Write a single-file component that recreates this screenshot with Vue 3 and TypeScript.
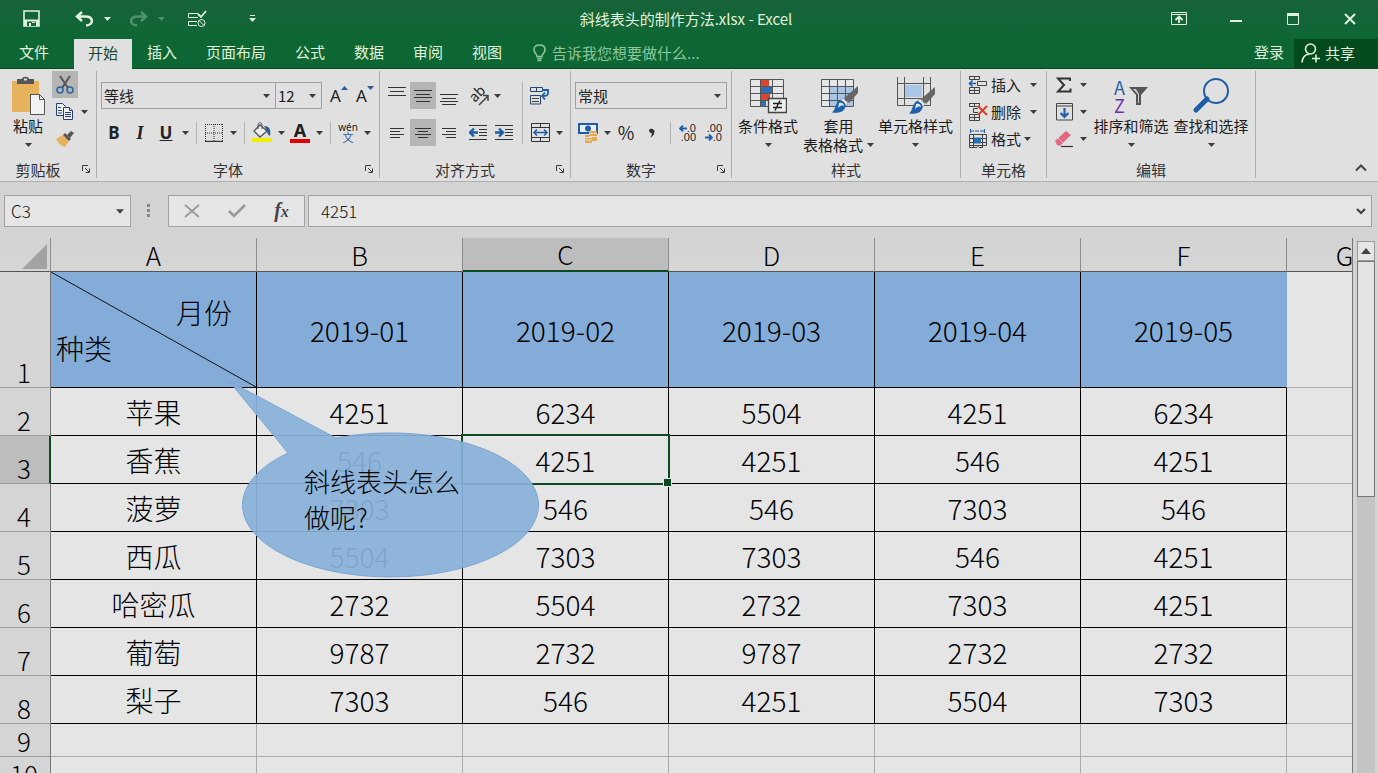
<script setup lang="ts">
import { ref } from 'vue'

interface SheetRow {
  n: number
  name: string
  values: string[]
}

const tabs: string[] = ['插入', '页面布局', '公式', '数据', '审阅', '视图']
const columns: string[] = ['A', 'B', 'C', 'D', 'E', 'F']
const months: string[] = ['2019-01', '2019-02', '2019-03', '2019-04', '2019-05']
const rows: SheetRow[] = [
  { n: 2, name: '苹果', values: ['4251', '6234', '5504', '4251', '6234'] },
  { n: 3, name: '香蕉', values: ['546', '4251', '4251', '546', '4251'] },
  { n: 4, name: '菠萝', values: ['7303', '546', '546', '7303', '546'] },
  { n: 5, name: '西瓜', values: ['5504', '7303', '7303', '546', '4251'] },
  { n: 6, name: '哈密瓜', values: ['2732', '5504', '2732', '7303', '4251'] },
  { n: 7, name: '葡萄', values: ['9787', '2732', '9787', '2732', '2732'] },
  { n: 8, name: '梨子', values: ['7303', '546', '4251', '5504', '7303'] },
]
const emptyRows: number[] = [9, 10]

const fontName = ref('等线')
const fontSize = ref('12')
const numberFormat = ref('常规')
const cellName = ref('C3')
const formula = ref('4251')
</script>

<template>
  <div class="app">
    <svg class="symbols" aria-hidden="true">
      <symbol id="caret" viewBox="0 0 7 4"><path d="M0 0H7L3.500 4Z" fill="currentColor" /></symbol>
      <symbol id="launcher" viewBox="0 0 8 8">
        <path d="M.5 6V.5H6M3 3L7 7M7.500 3.500V7.500H3.500" fill="none" stroke="currentColor" />
      </symbol>
      <symbol id="brush" viewBox="0 0 26 28">
        <path d="M26 0V7L17 17L12 12Z" fill="#666" />
        <path d="M11 12L16 17L14 20L8 14Z" fill="#eee" stroke="#777" stroke-width=".6" />
        <path d="M8 14C12 15 15 18 13 22C11 27 5 27 0 26.500C4 24 3 16 8 14Z" fill="#1f62ab" />
        <path d="M7 17C9 16 12 17 12 20C9 19 8 20 6 22Z" fill="#dce8f4" />
      </symbol>
    </svg>

    <header class="titlebar">
      <div class="quick">
        <button class="q save" aria-label="保存">
          <svg width="17" height="17" viewBox="0 0 17 17"><path d="M1 1H16V16H1Z" fill="none" stroke="currentColor" stroke-width="1.600" /><path d="M1 9.500H16V16H1Z" fill="currentColor" /><path d="M4 11.500H13V16H4Z" fill="#126637" /><path d="M6 13H8V16H6ZM9 12H12V13H9Z" fill="currentColor" /></svg>
        </button>
        <button class="q undo" aria-label="撤消">
          <svg width="19" height="16" viewBox="0 0 19 16"><path d="M7 1L2 5.500L7 10M2.500 5.500H10C19 5.500 19 14 11 14.500" fill="none" stroke="currentColor" stroke-width="2.500" /></svg>
        </button>
        <button class="c near" aria-label="撤消选项"><svg width="7" height="4"><use href="#caret" /></svg></button>
        <button class="q redo dim" aria-label="恢复">
          <svg width="19" height="16" viewBox="0 0 19 16"><path d="M12 1L17 5.500L12 10M16.500 5.500H9C0 5.500 0 14 8 14.500" fill="none" stroke="currentColor" stroke-width="2.500" /></svg>
        </button>
        <button class="c near dim" aria-label="恢复选项"><svg width="7" height="4"><use href="#caret" /></svg></button>
        <button class="q tasks" aria-label="任务">
          <svg width="19" height="18" viewBox="0 0 19 18" fill="none" stroke="currentColor"><path d="M10 3.500H.5V7.500H10M9 11.500H.5V15.500H9" /><path d="M10 4L13 7L18 1" stroke-width="1.800" /><circle cx="13.500" cy="13" r="3.500" /><path d="M11 10.500L16 15.500" /></svg>
        </button>
        <button class="c more" aria-label="自定义快速访问工具栏">
          <svg width="7" height="8" viewBox="0 0 7 8"><path d="M1 .5H6" stroke="currentColor" /><path d="M0 3H7L3.500 7Z" fill="currentColor" /></svg>
        </button>
      </div>
      <h1>斜线表头的制作方法.xlsx - Excel</h1>
      <div class="window">
        <button aria-label="功能区显示选项"><svg width="16" height="13" viewBox="0 0 16 13" fill="none" stroke="currentColor"><path d="M.5 .5H15.500V12.500H.5ZM0 2.500H16" /><path d="M8 11V5M4.500 8L8 4.500L11.500 8" stroke-width="1.800" /></svg></button>
        <button aria-label="最小化"><svg width="12" height="13" viewBox="0 0 12 13"><path d="M0 8H12V10H0Z" fill="currentColor" /></svg></button>
        <button aria-label="最大化"><svg width="12" height="12" viewBox="0 0 12 12"><path d="M.5 1H11.500V11.500H.5Z" fill="none" stroke="currentColor" /><path d="M0 0H12V3H0Z" fill="currentColor" /></svg></button>
        <button aria-label="关闭"><svg width="12" height="12" viewBox="0 0 12 12"><path d="M1 1L11 11M11 1L1 11" stroke="currentColor" stroke-width="2" /></svg></button>
      </div>
    </header>

    <nav class="tabs">
      <button class="tab file">文件</button>
      <button class="tab active">开始</button>
      <button v-for="t in tabs" :key="t" class="tab">{{ t }}</button>
      <button class="tell">
        <svg width="13" height="18" viewBox="0 0 13 18" fill="none" stroke="currentColor"><path d="M4 12.500C4 10 1 9 1 5.500C1 2.500 3.500 1 6.500 1S12 2.500 12 5.500C12 9 9 10 9 12.500Z" stroke-width="1.600" /><path d="M4 14.500H9M4.500 16.500H8.500" stroke-width="1.500" /></svg>
        告诉我您想要做什么...
      </button>
      <button class="login">登录</button>
      <button class="share">
        <svg width="20" height="20" viewBox="0 0 20 20" fill="none" stroke="currentColor" stroke-width="1.600"><circle cx="9.500" cy="6" r="5" /><path d="M1 19.500C1.500 14.500 4 11.500 8 11.300M11 15.500H19M15 11.500V19.500" /></svg>
        共享
      </button>
    </nav>

    <section class="ribbon" aria-label="开始">
      <div class="group clipboard">
        <div class="body top">
          <button class="big paste">
            <span class="pic"><svg width="36" height="40" viewBox="0 0 36 40"><path d="M2 5H29V36H2Z" fill="#e6b35c" /><path d="M7 3H12C12 0 19 0 19 3H24V8H7Z" fill="#555" /><path d="M14 2.500H17V4.500H14Z" fill="#ddd" /><path d="M20.500 18.500H29.500L34.500 23.500V38.500H20.500Z" fill="#f2f2f2" stroke="#555" /><path d="M29.500 18.500V23.500H34.500" fill="none" stroke="#555" /></svg></span>
            <span>粘贴</span>
            <span class="second"><svg width="7" height="4"><use href="#caret" /></svg></span>
          </button>
          <div class="stack">
            <button class="t on" aria-label="剪切"><svg width="18" height="20" viewBox="0 0 18 20" fill="none"><path d="M4 1L12 13M14 1L6 13" stroke="#555" stroke-width="2" /><circle cx="4" cy="15" r="3" stroke="#2a62a3" stroke-width="1.500" /><circle cx="14" cy="15" r="3" stroke="#2a62a3" stroke-width="1.500" /></svg></button>
            <div class="row">
              <button class="t" aria-label="复制"><svg width="18" height="19" viewBox="0 0 18 19" fill="#eee" stroke="#26416e"><path d="M.5 1.500H6.500L9.500 4.500V13.500H.5Z" /><path d="M2 5.500H5M2 8.500H6M2 11H6" /><path d="M7.500 5.500H13.500L16.500 8.500V17.500H7.500Z" /><path d="M13.500 5.500V8.500H16.500M9 10.500H15M9 12.500H15M9 14.500H15" /></svg></button>
              <button class="c" aria-label="复制选项"><svg width="7" height="4"><use href="#caret" /></svg></button>
            </div>
            <button class="t" aria-label="格式刷"><svg width="18" height="16" viewBox="0 0 18 16"><path d="M0 8L7 4L13 10L9 16C5 15 2 12 0 8Z" fill="#e6b35c" /><path d="M7 4L9 2L15 8L13 10Z" fill="#555" /><path d="M11 4L15 0L18 2L14 7Z" fill="#555" /></svg></button>
          </div>
        </div>
        <div class="caption"><span>剪贴板</span><button class="launch" aria-label="剪贴板设置"><svg width="8" height="8"><use href="#launcher" /></svg></button></div>
      </div>

      <div class="group font">
        <div class="body">
          <div class="lines">
            <div class="row">
              <span class="pick name"><select v-model="fontName" aria-label="字体"><option>等线</option></select><svg width="7" height="4"><use href="#caret" /></svg></span>
              <span class="pick size"><select v-model="fontSize" aria-label="字号"><option>12</option></select><svg width="7" height="4"><use href="#caret" /></svg></span>
              <button class="t grow first" aria-label="增大字号"><span>A</span><svg width="7" height="4" viewBox="0 0 7 4"><path d="M0 4H7L3.500 0Z" fill="#2a5c94" /></svg></button>
              <button class="t grow" aria-label="减小字号"><span>A</span><svg width="7" height="4" viewBox="0 0 7 4"><path d="M0 0H7L3.500 4Z" fill="#2a5c94" /></svg></button>
            </div>
            <div class="row">
              <button class="t b" aria-label="加粗">B</button>
              <button class="t i" aria-label="倾斜">I</button>
              <button class="t u" aria-label="下划线">U</button>
              <button class="c" aria-label="下划线选项"><svg width="7" height="4"><use href="#caret" /></svg></button>
              <i class="sep"></i>
              <button class="t" aria-label="边框"><svg width="18" height="18" viewBox="0 0 18 18" fill="none" stroke="#333"><path d="M.5 0V17M17.500 0V17M9 0V17M0 .5H18M0 9H18" stroke-dasharray="1 1" /><path d="M0 17.500H18" stroke-width="1.400" /></svg></button>
              <button class="c" aria-label="边框选项"><svg width="7" height="4"><use href="#caret" /></svg></button>
              <i class="sep"></i>
              <button class="t" aria-label="填充颜色"><svg width="20" height="21" viewBox="0 0 20 21"><path d="M8 3L15 9L8 15L2 9Z" fill="#eee" stroke="#555" stroke-width="1.300" /><path d="M6 7V3C6 0 10 0 10 3V7" fill="none" stroke="#555" /><path d="M12 4C18 4 19 8 18 14C16 13 15 11 15 9Z" fill="#2a6099" /><path d="M0 16H20V20H0Z" fill="#f1ee00" /></svg></button>
              <button class="c" aria-label="填充颜色选项"><svg width="7" height="4"><use href="#caret" /></svg></button>
              <button class="t color" aria-label="字体颜色"><span>A</span></button>
              <button class="c" aria-label="字体颜色选项"><svg width="7" height="4"><use href="#caret" /></svg></button>
              <i class="sep"></i>
              <button class="t pinyin" aria-label="拼音指南"><span>wén</span><span class="wen">文</span></button>
              <button class="c" aria-label="拼音选项"><svg width="7" height="4"><use href="#caret" /></svg></button>
            </div>
          </div>
        </div>
        <div class="caption"><span>字体</span><button class="launch" aria-label="字体设置"><svg width="8" height="8"><use href="#launcher" /></svg></button></div>
      </div>

      <div class="group align">
        <div class="body">
          <div class="lines">
            <div class="row">
              <button class="t" aria-label="顶端对齐"><svg width="18" height="18" viewBox="0 0 18 18" stroke="#333"><path d="M0 .5H18M2 4.500H16M0 8.500H18" /></svg></button>
              <button class="t on" aria-label="垂直居中"><svg width="18" height="18" viewBox="0 0 18 18" stroke="#333"><path d="M0 3.500H18M2 7.500H16M0 10.500H18M2 14.500H16" /></svg></button>
              <button class="t" aria-label="底端对齐"><svg width="18" height="18" viewBox="0 0 18 18" stroke="#333"><path d="M0 7.500H18M2 11.500H16M0 14.500H18M2 17.500H16" /></svg></button>
              <button class="t gap orient" aria-label="方向"><span>ab</span><svg width="11" height="12" viewBox="0 0 11 12"><path d="M1 11L10 2M5 1.500H10V7" fill="none" stroke="#444" stroke-width="1.500" /></svg></button>
              <button class="c" aria-label="方向选项"><svg width="7" height="4"><use href="#caret" /></svg></button>
            </div>
            <div class="row">
              <button class="t" aria-label="左对齐"><svg width="14" height="12" viewBox="0 0 14 12" stroke="#333"><path d="M0 1.500H14M0 4.500H10M0 7.500H14M0 10.500H10" /></svg></button>
              <button class="t on" aria-label="居中"><svg width="16" height="12" viewBox="0 0 16 12" stroke="#333"><path d="M0 1.500H16M3 4.500H13M0 7.500H16M3 10.500H13" /></svg></button>
              <button class="t" aria-label="右对齐"><svg width="14" height="12" viewBox="0 0 14 12" stroke="#333"><path d="M0 1.500H14M4 4.500H14M0 7.500H14M4 10.500H14" /></svg></button>
              <button class="t gap" aria-label="减少缩进量"><svg width="18" height="17" viewBox="0 0 18 17" fill="none"><path d="M0 1.500H18M10 5.500H18M10 8.500H18M10 11.500H18M0 15.500H18" stroke="#333" /><path d="M9 8.500H2M5 4.500L1 8.500L5 12.500" stroke="#1f5ea6" stroke-width="2.400" /></svg></button>
              <button class="t" aria-label="增加缩进量"><svg width="18" height="17" viewBox="0 0 18 17" fill="none"><path d="M0 1.500H18M10 5.500H18M10 8.500H18M10 11.500H18M0 15.500H18" stroke="#333" /><path d="M0 8.500H7M4 4.500L8 8.500L4 12.500" stroke="#1f5ea6" stroke-width="2.400" /></svg></button>
            </div>
          </div>
          <i class="sep tall"></i>
          <div class="lines">
            <div class="row">
              <button class="t" aria-label="自动换行"><svg width="20" height="19" viewBox="0 0 20 19" fill="none"><path d="M.5 1.500H12.500V5.500H.5ZM.5 9.500H10.500V18H.5ZM6.500 1.500V5.500" stroke="#2b4668" /><path d="M2 12.500H9M2 15.500H9" stroke="#444" /><path d="M12 4H18V7C18 10 16 10 12 10M15 6.500L12 10L15 13.500" stroke="#1f5ea6" stroke-width="1.800" /></svg></button>
            </div>
            <div class="row">
              <button class="t" aria-label="合并后居中"><svg width="19" height="19" viewBox="0 0 19 19" fill="none"><path d="M.5 .5H18.500V18.500H.5ZM.5 4.500H18.500M.5 14.500H18.500M9.500 .5V4.500M9.500 14.500V18.500" stroke="#333" /><path d="M3 9.500H16M6 6.500L3 9.500L6 12.500M13 6.500L16 9.500L13 12.500" stroke="#1f5ea6" stroke-width="1.500" /></svg></button>
              <button class="c" aria-label="合并选项"><svg width="7" height="4"><use href="#caret" /></svg></button>
            </div>
          </div>
        </div>
        <div class="caption"><span>对齐方式</span><button class="launch" aria-label="对齐设置"><svg width="8" height="8"><use href="#launcher" /></svg></button></div>
      </div>

      <div class="group number">
        <div class="body">
          <div class="lines">
            <div class="row">
              <span class="pick format"><select v-model="numberFormat" aria-label="数字格式"><option>常规</option></select><svg width="7" height="4"><use href="#caret" /></svg></span>
            </div>
            <div class="row">
              <button class="t" aria-label="会计数字格式"><svg width="20" height="20" viewBox="0 0 20 20"><path d="M1 1H19V10H1Z" fill="#e8eef4" stroke="#1f5ea6" stroke-width="2" /><circle cx="10" cy="5.500" r="3" fill="#1f5ea6" /><path d="M11 8H19V18H14V20H7V12H11Z" fill="#e4a850" /><path d="M11 10.500H19M11 13.500H19M7 14.500H14M7 17H14" stroke="#e0e0e0" /></svg></button>
              <button class="c" aria-label="会计格式选项"><svg width="7" height="4"><use href="#caret" /></svg></button>
              <button class="t percent" aria-label="百分比样式">%</button>
              <button class="t" aria-label="千位分隔样式"><svg width="6" height="10" viewBox="0 0 6 10"><path d="M0 2.500C0 0 5.500 0 5.500 3.500C5.500 6.500 3.500 9 1 9.500C2.500 8 3 6.500 2.500 5C1 5 0 4 0 2.500Z" fill="#333" /></svg></button>
              <i class="sep"></i>
              <button class="t dec" aria-label="增加小数位数"><span><svg width="8" height="7" viewBox="0 0 8 7" fill="none"><path d="M8 3.500H2M4 .5L1 3.500L4 6.500" stroke="#1f5ea6" stroke-width="1.800" /></svg>.0</span><span>.00</span></button>
              <button class="t dec" aria-label="减少小数位数"><span>.00</span><span><svg width="8" height="7" viewBox="0 0 8 7" fill="none"><path d="M0 3.500H6M4 .5L7 3.500L4 6.500" stroke="#1f5ea6" stroke-width="1.800" /></svg>.0</span></button>
            </div>
          </div>
        </div>
        <div class="caption"><span>数字</span><button class="launch" aria-label="数字设置"><svg width="8" height="8"><use href="#launcher" /></svg></button></div>
      </div>

      <div class="group styles">
        <div class="body top">
          <button class="big w66">
            <span class="pic"><svg width="38" height="36" viewBox="0 0 38 36"><path d="M1.500 1.500H34.500V28.500H1.500Z" fill="#e6e6e6" /><path d="M12 1H20V8H12ZM12 16H21V22H12Z" fill="#d8472b" /><path d="M12 8H23V15H12ZM12 23H17V29H12Z" fill="#2e6db4" /><path d="M1.500 1.500H34.500V28.500H1.500ZM11.500 1V28M23.500 1V28M1 8.500H34M1 15.500H34M1 22.500H34" fill="none" stroke="#555" /><path d="M19.500 20.500H37.500V34.500H19.500Z" fill="#ededed" stroke="#444" stroke-width="1.400" /><path d="M24 25.500H33M24 29.500H33M31 22.500L26 32.500" stroke="#222" stroke-width="1.400" /></svg></span>
            <span>条件格式</span>
            <span class="second"><svg width="7" height="4"><use href="#caret" /></svg></span>
          </button>
          <button class="big w75">
            <span class="pic"><svg width="38" height="36" viewBox="0 0 38 36"><path d="M1.500 1.500H33.500V28.500H1.500Z" fill="#e6e6e6" /><path d="M10 8H33V28H10Z" fill="#a9c6e6" /><path d="M1.500 1.500H33.500V28.500H1.500ZM9.500 1V28M17.500 1V28M25.500 1V28M1 8.500H33M1 15.500H33M1 22.500H33" fill="none" stroke="#555" /><use href="#brush" x="12" y="8" width="26" height="28" /></svg></span>
            <span>套用</span>
            <span class="second">表格格式<svg width="7" height="4"><use href="#caret" /></svg></span>
          </button>
          <button class="big w79">
            <span class="pic"><svg width="40" height="38" viewBox="0 0 40 38"><path d="M9 8H26V20H9Z" fill="#a9c6e6" /><path d="M1.500 0V28.500H34.500V0M8.500 0V28M27.500 0V28M1 6.500H35M1 21.500H35" fill="none" stroke="#555" /><use href="#brush" x="13" y="10" width="26" height="28" /></svg></span>
            <span>单元格样式</span>
            <span class="second"><svg width="7" height="4"><use href="#caret" /></svg></span>
          </button>
        </div>
        <div class="caption"><span>样式</span></div>
      </div>

      <div class="group cells">
        <div class="body top">
          <div class="stack">
            <button class="line"><svg width="20" height="20" viewBox="0 0 20 20" fill="none" stroke="#444"><path d="M1.500 1V4.500H11.500V1M6.500 1V4.500M9.500 6.500H18.500V10.500H9.500ZM1.500 12.500H11.500V18.500H1.500ZM1.500 15.500H11.500M6.500 12.500V18.500M1 1.500H12" /><path d="M8 8.500H2M4.500 5.500L1.500 8.500L4.500 11.500" stroke="#1f5ea6" stroke-width="1.600" /></svg><span>插入</span><svg class="far" width="7" height="4"><use href="#caret" /></svg></button>
            <button class="line"><svg width="20" height="20" viewBox="0 0 20 20" fill="none" stroke="#444"><path d="M1.500 1V4.500H11.500V1M6.500 1V4.500M5.500 6.500H10M5.500 6.500V10.500H10M1.500 12.500H11.500V18.500H1.500ZM1.500 15.500H11.500M6.500 12.500V18.500M1 1.500H12" /><path d="M10 4L19 13M19 4L10 13" stroke="#d2402b" stroke-width="2" /></svg><span>删除</span><svg class="far" width="7" height="4"><use href="#caret" /></svg></button>
            <button class="line"><svg width="20" height="20" viewBox="0 0 20 20" fill="none" stroke="#444"><path d="M2 2H17M2.500 0V4M16.500 0V4" stroke="#1f5ea6" stroke-dasharray="4 1" /><path d="M1.500 5.500H18.500V16.500H1.500ZM5.500 5V19M14.500 5V19M1 9.500H18M1 13.500H18M1.500 16V18.500H9L11 16.500M11 18.500H14" /><path d="M6 8.500H13V14.500H6Z" fill="#2e6db4" stroke="none" /></svg><span>格式</span><svg width="7" height="4"><use href="#caret" /></svg></button>
          </div>
        </div>
        <div class="caption"><span>单元格</span></div>
      </div>

      <div class="group editing">
        <div class="body top">
          <div class="stack">
            <div class="row"><button class="t" aria-label="自动求和"><svg width="16" height="16" viewBox="0 0 16 16"><path d="M14 4V1.500H2L8 8L2 14.500H14.500V11.500" fill="none" stroke="#333" stroke-width="2" /></svg></button><button class="c" aria-label="求和选项"><svg width="7" height="4"><use href="#caret" /></svg></button></div>
            <div class="row"><button class="t" aria-label="填充"><svg width="17" height="18" viewBox="0 0 17 18" fill="none"><path d="M.5 .5H16.500V17H.5ZM.5 3H16.500" stroke="#444" /><path d="M8.500 5V14M4.500 10L8.500 14L12.500 10" stroke="#1f5ea6" stroke-width="2.200" /></svg></button><button class="c" aria-label="填充选项"><svg width="7" height="4"><use href="#caret" /></svg></button></div>
            <div class="row"><button class="t" aria-label="清除"><svg width="18" height="18" viewBox="0 0 18 18"><path d="M0 11L11 1L16 5L5 16L2 15Z" fill="#e2677f" /><path d="M3 8L8 13" stroke="#f2c6ce" /><path d="M6 16.500H18" stroke="#333" stroke-width="1.200" /></svg></button><button class="c" aria-label="清除选项"><svg width="7" height="4"><use href="#caret" /></svg></button></div>
          </div>
          <button class="big w80">
            <span class="pic sort"><span class="az"><span>A</span><span class="z">Z</span></span><svg width="19" height="18" viewBox="0 0 19 18"><path d="M0 0H19L12 8V18H7V8Z" fill="#555" /><path d="M4 2L9 7.500V16H10V7L7 2Z" fill="#ccc" /></svg></span>
            <span>排序和筛选</span>
            <span class="second"><svg width="7" height="4"><use href="#caret" /></svg></span>
          </button>
          <button class="big w80">
            <span class="pic"><svg width="38" height="36" viewBox="0 0 38 36" fill="none" stroke="#1f5ea6"><circle cx="24" cy="13" r="12" stroke-width="2" /><path d="M15 21L4 32" stroke-width="5" stroke-linecap="round" /></svg></span>
            <span>查找和选择</span>
            <span class="second"><svg width="7" height="4"><use href="#caret" /></svg></span>
          </button>
        </div>
        <div class="caption"><span>编辑</span></div>
      </div>
      <button class="collapse" aria-label="折叠功能区"><svg width="12" height="8" viewBox="0 0 12 8"><path d="M1 6.500L6 1.500L11 6.500" fill="none" stroke="#444" stroke-width="2" /></svg></button>
    </section>

    <section class="formula">
      <div class="box namebox"><input v-model="cellName" aria-label="名称框" /><svg width="8" height="5"><use href="#caret" /></svg></div>
      <svg class="dots" width="4" height="14" viewBox="0 0 4 14"><path d="M0 0H3V3H0ZM0 5H3V8H0ZM0 10H3V13H0Z" fill="#888" /></svg>
      <div class="box actions">
        <button aria-label="取消"><svg width="16" height="14" viewBox="0 0 16 14"><path d="M1 1L15 13M15 1L1 13" stroke="#999" stroke-width="1.800" /></svg></button>
        <button aria-label="输入"><svg width="18" height="14" viewBox="0 0 18 14"><path d="M1 7L6 12L17 1" fill="none" stroke="#999" stroke-width="2.600" /></svg></button>
        <button class="fx" aria-label="插入函数">f<small>x</small></button>
      </div>
      <div class="box entry"><input v-model="formula" aria-label="编辑栏" /><svg width="10" height="7" viewBox="0 0 10 7"><path d="M1 1L5 5L9 1" fill="none" stroke="#444" stroke-width="2.200" /></svg></div>
    </section>

    <main class="sheet">
      <div class="view">
        <table>
          <colgroup>
            <col class="cn" /><col v-for="c in columns" :key="c" class="cd" /><col class="cg" />
          </colgroup>
          <thead>
            <tr>
              <th class="corner"><svg width="25" height="25" viewBox="0 0 25 25"><path d="M25 0V25H0Z" fill="#a2a2a2" /></svg></th>
              <th v-for="c in columns" :key="c" :class="{ picked: c === 'C' }">{{ c }}</th>
              <th>G</th>
            </tr>
          </thead>
          <tbody>
            <tr class="months">
              <th>1</th>
              <td class="split">
                <svg viewBox="0 0 206 116" preserveAspectRatio="none"><path d="M0 0L206 116" stroke="#111" /></svg>
                <div class="month">月份</div>
                <div class="kind">种类</div>
              </td>
              <td v-for="m in months" :key="m">{{ m }}</td>
              <td class="blank"></td>
            </tr>
            <tr v-for="r in rows" :key="r.n" class="data">
              <th :class="{ picked: r.n === 3 }">{{ r.n }}</th>
              <td>{{ r.name }}</td>
              <td v-for="(v, i) in r.values" :key="i" :class="{ current: r.n === 3 && i === 1 }">{{ v }}</td>
              <td class="blank"></td>
            </tr>
            <tr v-for="n in emptyRows" :key="n" class="empty">
              <th>{{ n }}</th>
              <td v-for="c in columns" :key="c" class="blank"></td>
              <td class="blank"></td>
            </tr>
          </tbody>
        </table>
        <div class="callout">
          <svg width="310" height="197" viewBox="0 0 310 197"><path d="M0 0L107 57A148 72 0 1 1 59 72Z" fill="#88b1da" fill-opacity=".92" stroke="#7ba5d1" /></svg>
          <p>斜线表头怎么<br />做呢?</p>
        </div>
      </div>
      <div class="scroll">
        <button class="up" aria-label="向上滚动"><svg width="10" height="6" viewBox="0 0 10 6"><path d="M0 6H10L5 0Z" fill="#444" /></svg></button>
        <div class="track"><div class="thumb"></div></div>
      </div>
    </main>
  </div>
</template>

<style>
body {
  overflow: hidden;
}
</style>

<style scoped>
.app {
  display: flex;
  flex-direction: column;
  height: 100vh;
  overflow: hidden;
  font: 15px/19px "Noto Sans CJK SC", sans-serif;
  color: #262626;
  background: #d3d3d3;
}
.app * {
  box-sizing: border-box;
}
.symbols {
  position: absolute;
  width: 0;
  height: 0;
}
button {
  display: flex;
  align-items: center;
  justify-content: center;
  flex: none;
  padding: 0;
  border: 0;
  background: none;
  font: inherit;
  color: inherit;
  white-space: nowrap;
}
svg {
  display: block;
  flex: none;
}

.titlebar {
  display: grid;
  grid-template-columns: 1fr auto 1fr;
  align-items: center;
  flex: none;
  height: 37px;
  color: #e2f2dc;
  background: linear-gradient(#176339, #0f6735);
}
.titlebar h1 {
  margin: 0;
  padding-right: 6px;
  font: 15px/20px "Noto Sans CJK SC", sans-serif;
}
.quick {
  display: flex;
  align-items: center;
  height: 34px;
}
.q {
  width: 28px;
}
.save {
  margin-left: 17px;
}
.undo {
  margin-left: 25px;
}
.near {
  margin-left: 3px;
}
.redo {
  margin-left: 11px;
}
.tasks {
  margin-left: 16px;
}
.more {
  margin-left: 35px;
}
.quick .dim {
  color: #4f9468;
}
.window {
  display: flex;
  justify-content: flex-end;
}
.window button {
  width: 57px;
  height: 36px;
}

.tabs {
  display: flex;
  align-items: stretch;
  gap: 1px;
  flex: none;
  height: 32px;
  color: #e2f2dc;
  background: #0d6735;
  border-bottom: 1px solid #0a4823;
}
.tab {
  padding: 0 14px 4px;
  margin-top: 2px;
}
.file {
  width: 68px;
  margin-right: 5px;
}
.tab.active {
  margin-bottom: -1px;
  color: #17492c;
  background: #e0e0e0;
}
.tell {
  gap: 6px;
  margin-left: 16px;
  color: #8fc59b;
}
.login {
  margin-left: auto;
  padding-bottom: 2px;
}
.share {
  gap: 4px;
  margin: 2px 0 0 9px;
  padding: 0 23px 2px 7px;
  background: #034a1e;
}

.ribbon {
  display: flex;
  flex: none;
  padding: 2px 0 3px;
  color: #222;
  background: #e0e0e0;
  border-bottom: 1px solid #b0b0b0;
}
.group {
  display: flex;
  flex-direction: column;
  flex: none;
  border-right: 1px solid #aeaeae;
}
.ribbon use {
  color: #3c3c3c;
}
.clipboard {
  width: 97px;
}
.font {
  width: 283px;
}
.align {
  width: 191px;
}
.number {
  width: 161px;
}
.styles {
  width: 229px;
}
.cells {
  width: 86px;
}
.editing {
  width: 209px;
}
.body {
  display: flex;
  height: 87px;
  padding: 11px 0 0 4px;
}
.body.top {
  padding-top: 0;
}
.styles .body {
  padding-left: 3px;
}
.lines {
  display: flex;
  flex-direction: column;
  gap: 10px;
}
.row {
  display: flex;
  align-items: center;
  height: 27px;
}
.stack {
  display: flex;
  flex-direction: column;
}
.t {
  width: 26px;
  height: 27px;
}
.on {
  background: #b5b5b5;
}
.c {
  width: 12px;
  height: 27px;
}
.caption {
  display: flex;
  align-items: center;
  height: 20px;
  padding-top: 2px;
  color: #333;
}
.caption span {
  flex: 1;
  text-align: center;
}
.launch {
  width: 20px;
  height: 18px;
}
.sep {
  width: 1px;
  height: 22px;
  margin: 0 4px 0 5px;
  background: #b4b4b4;
}
.sep.tall {
  height: 62px;
}
.big {
  flex-direction: column;
  justify-content: flex-start;
  padding-top: 5px;
  color: #1b1b1b;
}
.pic {
  display: flex;
  align-items: center;
  justify-content: center;
  height: 40px;
}
.second {
  display: flex;
  align-items: center;
  gap: 4px;
  height: 19px;
}
.sort {
  gap: 4px;
}
.az {
  display: flex;
  flex-direction: column;
  font: 18px/18px "Noto Sans CJK SC", sans-serif;
  color: #1f5ea6;
}
.az .z {
  color: #7030a0;
}
.paste {
  width: 48px;
}
.w66 {
  width: 66px;
}
.w75 {
  width: 75px;
}
.w79 {
  width: 79px;
}
.w80 {
  width: 80px;
}
.pick {
  position: relative;
  display: flex;
  height: 27px;
  border: 1px solid #a0a0a0;
}
.pick select {
  width: 100%;
  padding: 0 2px;
  border: 0;
  background: none;
  appearance: none;
  font: inherit;
  color: #222;
}
.pick svg {
  position: absolute;
  right: 5px;
  top: 11px;
  pointer-events: none;
}
.name {
  width: 175px;
}
.size {
  width: 47px;
  margin-left: -1px;
}
.format {
  width: 152px;
}
.grow {
  align-items: flex-start;
  font: 17px/27px "Noto Sans", sans-serif;
}
.grow.first {
  margin-left: 4px;
}
.grow svg {
  margin-top: 4px;
}
.b {
  font: bold 17px/24px "Noto Sans", sans-serif;
}
.i {
  font: italic bold 18px/24px "Liberation Serif", serif;
}
.u {
  font: bold 17px/24px "Noto Sans", sans-serif;
  text-decoration: underline;
}
.color span {
  width: 20px;
  height: 21px;
  border-bottom: 4px solid #e00000;
  font: bold 18px/16px "Noto Sans", sans-serif;
}
.pinyin {
  flex-direction: column;
  font: 10px/9px "Noto Sans", sans-serif;
}
.pinyin .wen {
  font: 11px/11px "Noto Sans CJK SC", sans-serif;
  color: #1f5ea6;
}
.gap {
  margin-left: 3px;
}
.orient {
  position: relative;
}
.orient span {
  position: absolute;
  left: 3px;
  top: 2px;
  font: 14px/18px "Noto Sans CJK SC", sans-serif;
  transform: rotate(-45deg);
}
.orient svg {
  margin: 8px 0 0 10px;
}
.percent {
  font: 18px/27px "Noto Sans CJK SC", sans-serif;
}
.dec {
  flex-direction: column;
  align-items: flex-end;
  padding-right: 5px;
  font: 11px/9px "Liberation Sans", sans-serif;
}
.dec span {
  display: flex;
  align-items: center;
}
.line {
  height: 27px;
  gap: 3px;
  padding-left: 3px;
  justify-content: flex-start;
}
.line .far {
  margin-left: 6px;
}
.editing .stack {
  width: 40px;
}
.collapse {
  align-self: flex-end;
  width: 34px;
  height: 20px;
  margin-left: auto;
}

.formula {
  display: flex;
  align-items: center;
  flex: none;
  padding: 13px 6px 11px 4px;
}
.box {
  display: flex;
  align-items: center;
  height: 32px;
  background: #e5e5e5;
  border: 1px solid #a3a3a3;
}
.box input {
  flex: 1;
  min-width: 0;
  padding: 0;
  border: 0;
  background: none;
  font: 300 17px/24px "Noto Sans CJK SC", sans-serif;
  color: #111;
}
.namebox {
  width: 127px;
  padding: 0 6px;
}
.namebox svg {
  color: #444;
}
.dots {
  margin: 0 17px 0 16px;
}
.actions {
  width: 137px;
  margin-right: 3px;
}
.actions button {
  width: 45px;
  height: 30px;
}
.actions .fx {
  align-items: baseline;
  font: italic bold 20px/28px "Liberation Serif", serif;
  color: #444;
}
.fx small {
  font-size: 16px;
}
.entry {
  flex: 1;
  padding: 0 5px 0 12px;
}

.sheet {
  display: flex;
  flex: 1;
  min-height: 0;
}
.view {
  position: relative;
  flex: 1;
  min-width: 0;
  overflow: hidden;
}
table {
  width: 1403px;
  border-spacing: 0;
  table-layout: fixed;
  font: 300 28px/36px "Noto Sans CJK SC", sans-serif;
  color: #000;
}
.cn {
  width: 51px;
}
.cd {
  width: 206px;
}
.cg {
  width: 116px;
}
th,
td {
  padding: 0;
  text-align: center;
  font-weight: 300;
}
thead th {
  height: 34px;
  font-size: 26px;
  line-height: 33px;
  background: linear-gradient(#d3d3d3, #d6d6d6);
  border-right: 1px solid #8d8d8d;
  border-bottom: 1px solid #555;
}
thead .picked {
  line-height: 32px;
  background: #bdbdbd;
  border-bottom: 2px solid #0d4a22;
}
.corner svg {
  margin: 4px 0 0 22px;
}
tbody th {
  padding-right: 2px;
  vertical-align: bottom;
  font-size: 26px;
  line-height: 30px;
  background: #d5d5d5;
  border-right: 1px solid #777;
  border-bottom: 1px solid #9a9a9a;
}
tbody .picked {
  padding-right: 1px;
  background: #bdbdbd;
  border-right: 2px solid #0d4a22;
}
td {
  background: #e5e5e5;
  border-right: 1px solid #000;
  border-bottom: 1px solid #000;
}
.months > * {
  height: 116px;
}
.months td {
  background: #83add8;
}
.months td:nth-last-child(2) {
  border-right-color: #83add8;
}
.data > * {
  height: 48px;
}
.empty > * {
  height: 33px;
}
td.blank,
.months td.blank {
  background: #e5e5e5;
  border-color: #ababab;
}
.split {
  position: relative;
}
.split svg {
  position: absolute;
  inset: 0;
  width: 100%;
  height: 100%;
}
.month {
  padding-right: 24px;
  text-align: right;
}
.kind {
  padding-left: 5px;
  text-align: left;
}
.current {
  position: relative;
}
.current::before {
  content: "";
  position: absolute;
  inset: -2px;
  border: 2px solid #0d4a22;
}
.current::after {
  content: "";
  position: absolute;
  right: -4px;
  bottom: -4px;
  width: 7px;
  height: 7px;
  background: #0d4a22;
  border: 1px solid #e5e5e5;
}
.callout {
  position: absolute;
  left: 229px;
  top: 143px;
}
.callout p {
  position: absolute;
  left: 75px;
  top: 82px;
  margin: 0;
  font: 300 26px/36px "Noto Sans CJK SC", sans-serif;
  color: #000;
  white-space: nowrap;
}
.scroll {
  display: flex;
  flex-direction: column;
  width: 26px;
  padding: 3px 3px 0 4px;
  border-left: 1px solid #777;
}
.up {
  height: 20px;
  background: #e5e5e5;
  border: 1px solid #999;
}
.track {
  flex: 1;
  background: #c4c4c4;
}
.thumb {
  height: 46%;
  background: #e3e3e3;
  border: 1px solid #777;
}
</style>
